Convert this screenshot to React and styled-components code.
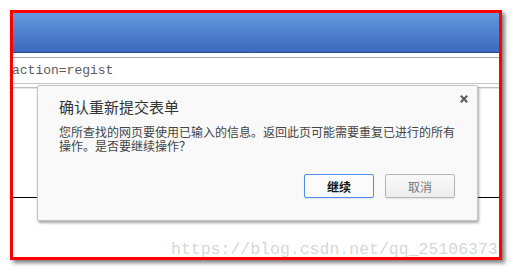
import React from 'react'
import styled, { createGlobalStyle } from 'styled-components'

const cjk = '"Noto Sans CJK SC", "Noto Sans", sans-serif'
const mono = '"Liberation Mono", "DejaVu Sans Mono", monospace'

const GlobalStyle = createGlobalStyle`
  html, body {
    margin: 0;
    padding: 0;
    background: #fff;
  }
`

const Page = styled.div`
  position: relative;
  width: 512px;
  height: 270px;
  padding: 10px 0 0 10px;
  box-sizing: border-box;
  overflow: hidden;
`

const Frame = styled.div`
  position: relative;
  width: 492px;
  height: 250px;
  box-sizing: border-box;
  border: 3px solid #ff0000;
  box-shadow: 3px 3px 4px rgba(0, 0, 0, 0.5);
  display: flex;
  flex-direction: column;
  background: #fff;
`

const Header = styled.div`
  height: 39px;
  flex: none;
  background: linear-gradient(#6699de, #3b68bd);
  border-bottom: 1px solid #2c4c8c;
`

const UrlBar = styled.div`
  margin-top: 4px;
  height: 25px;
  flex: none;
  display: flex;
  align-items: center;
  border-top: 1px solid #a8a8a8;
  border-bottom: 1px solid #c6c6c6;
  overflow: hidden;
`

const UrlText = styled.span`
  margin-left: -1px;
  font-family: ${mono};
  font-size: 13px;
  color: #5a5a5a;
`

const Content = styled.div`
  position: relative;
  flex: 1;
  display: flex;
  flex-direction: column;
`

const TabLine = styled.div`
  margin-top: 3px;
  height: 1px;
  background: #bdbdbd;
  border-bottom: 1px solid #e6e6e6;
`

const BlackLine = styled.div`
  margin-top: 108px;
  height: 1px;
  background: #000;
`

const Dialog = styled.div`
  position: absolute;
  left: 24px;
  top: 1px;
  width: 441px;
  height: 136px;
  box-sizing: border-box;
  padding: 12px 22px 22px 21px;
  background: #f9f9f9;
  border: 1px solid #c4c4c4;
  border-radius: 2px;
  box-shadow: 1px 2px 3px rgba(0, 0, 0, 0.35);
  display: flex;
  flex-direction: column;
  font-family: ${cjk};
`

const Title = styled.div`
  font-size: 15px;
  line-height: 18px;
  color: #333;
`

const Message = styled.div`
  margin-top: 9px;
  font-size: 12px;
  line-height: 14px;
  color: #444;
`

const Close = styled.svg`
  position: absolute;
  top: 9px;
  right: 9px;
  width: 8px;
  height: 8px;
`

const Actions = styled.div`
  margin-top: auto;
  display: flex;
  justify-content: flex-end;
  gap: 11px;
`

const Button = styled.button`
  width: 70px;
  height: 24px;
  padding: 0;
  box-sizing: border-box;
  border-radius: 2px;
  font-family: ${cjk};
  font-size: 12px;
  font-weight: ${p => (p.$primary ? 700 : 400)};
  color: ${p => (p.$primary ? '#111' : '#777')};
  border: 1px solid ${p => (p.$primary ? '#4d8ef0' : '#b5b5b5')};
  background: ${p => (p.$primary ? '#fbfbfb' : 'linear-gradient(#f8f8f8, #ededed)')};
  box-shadow: 0 1px 1px rgba(0, 0, 0, 0.08);
`

const Watermark = styled.div`
  position: absolute;
  left: 171px;
  top: 240px;
  font-family: ${mono};
  font-size: 16.5px;
  line-height: 20px;
  color: rgba(150, 150, 150, 0.4);
  white-space: nowrap;
  pointer-events: none;
`

export default function App() {
  return (
    <>
      <GlobalStyle />
      <Page>
        <Frame>
          <Header />
          <UrlBar>
            <UrlText>action=regist</UrlText>
          </UrlBar>
          <Content>
            <TabLine />
            <BlackLine />
            <Dialog>
              <Close viewBox="0 0 8 8">
                <path d="M0.8 0.8 L7.2 7.2 M7.2 0.8 L0.8 7.2" stroke="#5a5a5a" strokeWidth="2" />
              </Close>
              <Title>确认重新提交表单</Title>
              <Message>
                您所查找的网页要使用已输入的信息。返回此页可能需要重复已进行的所有操作。是否要继续操作？
              </Message>
              <Actions>
                <Button $primary>继续</Button>
                <Button>取消</Button>
              </Actions>
            </Dialog>
          </Content>
        </Frame>
        <Watermark>https://blog.csdn.net/qq_25106373</Watermark>
      </Page>
    </>
  )
}
